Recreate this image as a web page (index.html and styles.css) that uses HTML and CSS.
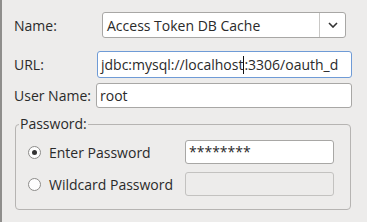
FILE: index.html
```html
<!DOCTYPE html>
<html lang="en">
<head>
    <meta charset="UTF-8">
    <title>Connection Settings</title>
    <link rel="stylesheet" href="styles.css">
</head>
<body>
<div class="panel">
    <div class="row row-name">
        <span class="label">Name:</span>
        <div class="combo">
            <span class="combo-text">Access Token DB Cache</span>
            <span class="combo-btn">
                <svg width="10" height="6" viewBox="0 0 10 6"><path d="M1 1 L5 5 L9 1" fill="none" stroke="#333" stroke-width="1.6"/></svg>
            </span>
        </div>
    </div>

    <div class="row row-url">
        <span class="label">URL:</span>
        <div class="field field-url focused">jdbc:mysql://localhost<span class="caret"></span>:3306/oauth_d</div>
    </div>

    <div class="row row-user">
        <span class="label">User Name:</span>
        <div class="field field-user">root</div>
    </div>

    <fieldset class="group">
        <legend>Password:</legend>
        <div class="opt opt-first">
            <span class="radio checked"></span>
            <span class="opt-label">Enter Password</span>
            <div class="field field-pass">********</div>
        </div>
        <div class="opt">
            <span class="radio"></span>
            <span class="opt-label">Wildcard Password</span>
            <div class="field field-pass disabled"></div>
        </div>
    </fieldset>
</div>
</body>
</html>
```

FILE: styles.css
```css
* {
    margin: 0;
    padding: 0;
    box-sizing: border-box;
}

body {
    font-family: 'Open Sans', 'DejaVu Sans', sans-serif;
    font-size: 14px;
    background: #edeceb;
    color: #2a2a2a;
}

.panel {
    height: 222px;
    border-left: 2px solid #8f8e8c;
    padding: 12px 15px 0 12px;
}

.row {
    display: flex;
    align-items: center;
}

.label {
    flex: 1;
}

.combo {
    width: 244px;
    height: 26px;
    margin-right: 6px;
    display: flex;
    align-items: center;
    background: #fff;
    border: 1px solid #a8a7a5;
    border-radius: 3px;
}

.combo-text {
    flex: 1;
    padding-left: 4px;
}

.combo-btn {
    width: 26px;
    height: 100%;
    border-left: 1px solid #c9c8c6;
    display: flex;
    align-items: center;
    justify-content: center;
}

.field {
    height: 25px;
    line-height: 23px;
    padding-left: 3px;
    background: #fff;
    border: 1px solid #a8a7a5;
    border-radius: 3px;
    white-space: nowrap;
    overflow: hidden;
}

.field.focused {
    border-color: #6f9bd6;
}

.row-url {
    margin-top: 13px;
}

.field-url {
    width: 255px;
    height: 27px;
    line-height: 25px;
}

.row-user {
    margin-top: 5px;
}

.field-user {
    width: 256px;
}

.caret {
    display: inline-block;
    width: 1px;
    height: 18px;
    background: #111;
    vertical-align: -4px;
}

.group {
    margin: 9px 1px 0 1px;
    height: 93px;
    border: 1px solid #b6b4b2;
    border-radius: 4px;
    padding: 9px 16px 0 12px;
}

.group legend {
    margin-left: -9px;
    padding: 0 1px;
    line-height: 14px;
}

.opt {
    display: flex;
    align-items: center;
    margin-top: 8px;
}

.opt-first {
    margin-top: 0;
}

.radio {
    width: 13px;
    height: 13px;
    border: 1px solid #8d8c8a;
    border-radius: 50%;
    background: #fdfdfd;
    position: relative;
}

.radio.checked::after {
    content: "";
    position: absolute;
    left: 3px;
    top: 3px;
    width: 5px;
    height: 5px;
    border-radius: 50%;
    background: #333;
}

.opt-label {
    flex: 1;
    margin-left: 8px;
}

.field-pass {
    width: 149px;
    height: 24px;
    line-height: 22px;
}

.field.disabled {
    background: #edeceb;
    border-color: #c3c2c0;
}
```
